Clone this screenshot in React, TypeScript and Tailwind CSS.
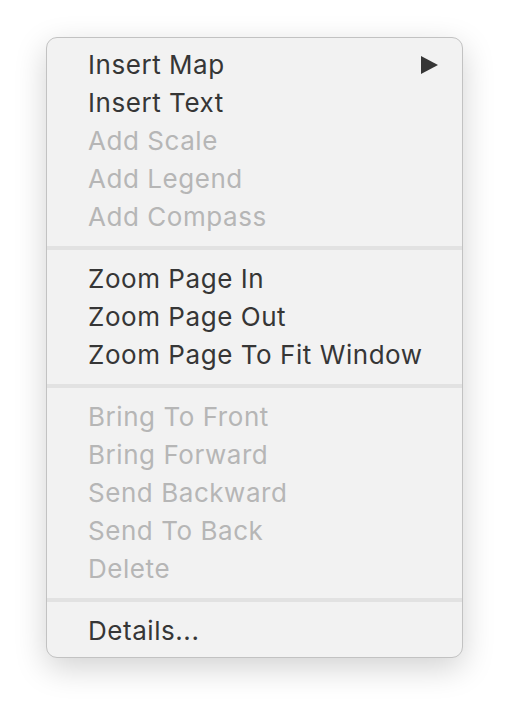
const groups: { label: string; disabled?: boolean; submenu?: boolean }[][] = [
  [
    { label: "Insert Map", submenu: true },
    { label: "Insert Text" },
    { label: "Add Scale", disabled: true },
    { label: "Add Legend", disabled: true },
    { label: "Add Compass", disabled: true },
  ],
  [{ label: "Zoom Page In" }, { label: "Zoom Page Out" }, { label: "Zoom Page To Fit Window" }],
  [
    { label: "Bring To Front", disabled: true },
    { label: "Bring Forward", disabled: true },
    { label: "Send Backward", disabled: true },
    { label: "Send To Back", disabled: true },
    { label: "Delete", disabled: true },
  ],
  [{ label: "Details..." }],
];

export default function App() {
  return (
    <div className="w-[508px] h-[712px] bg-white overflow-hidden pt-[37px] pl-[46px]">
      <div className="w-[417px] rounded-[11px] border border-[#c2c2c2] bg-[#f2f2f2] pt-[8px] pb-[7px] shadow-[0_10px_32px_rgba(0,0,0,0.18)] font-['Inter','Liberation_Sans',sans-serif]">
        {groups.map((group, gi) => (
          <div key={gi}>
            {gi > 0 && <div className="my-[10px] h-[4px] bg-[#e2e2e2]" />}
            {group.map((item) => (
              <div
                key={item.label}
                className={`flex items-center justify-between h-[38px] pl-[41px] pr-[24px] text-[26px] leading-none tracking-[0.55px] ${
                  item.disabled ? "text-[#b6b6b6]" : "text-[#363636]"
                }`}
              >
                <span>{item.label}</span>
                {item.submenu && (
                  <svg width="17" height="18" viewBox="0 0 17 18" className="fill-[#363636]">
                    <path d="M0 0 L17 9 L0 18 Z" />
                  </svg>
                )}
              </div>
            ))}
          </div>
        ))}
      </div>
    </div>
  );
}
